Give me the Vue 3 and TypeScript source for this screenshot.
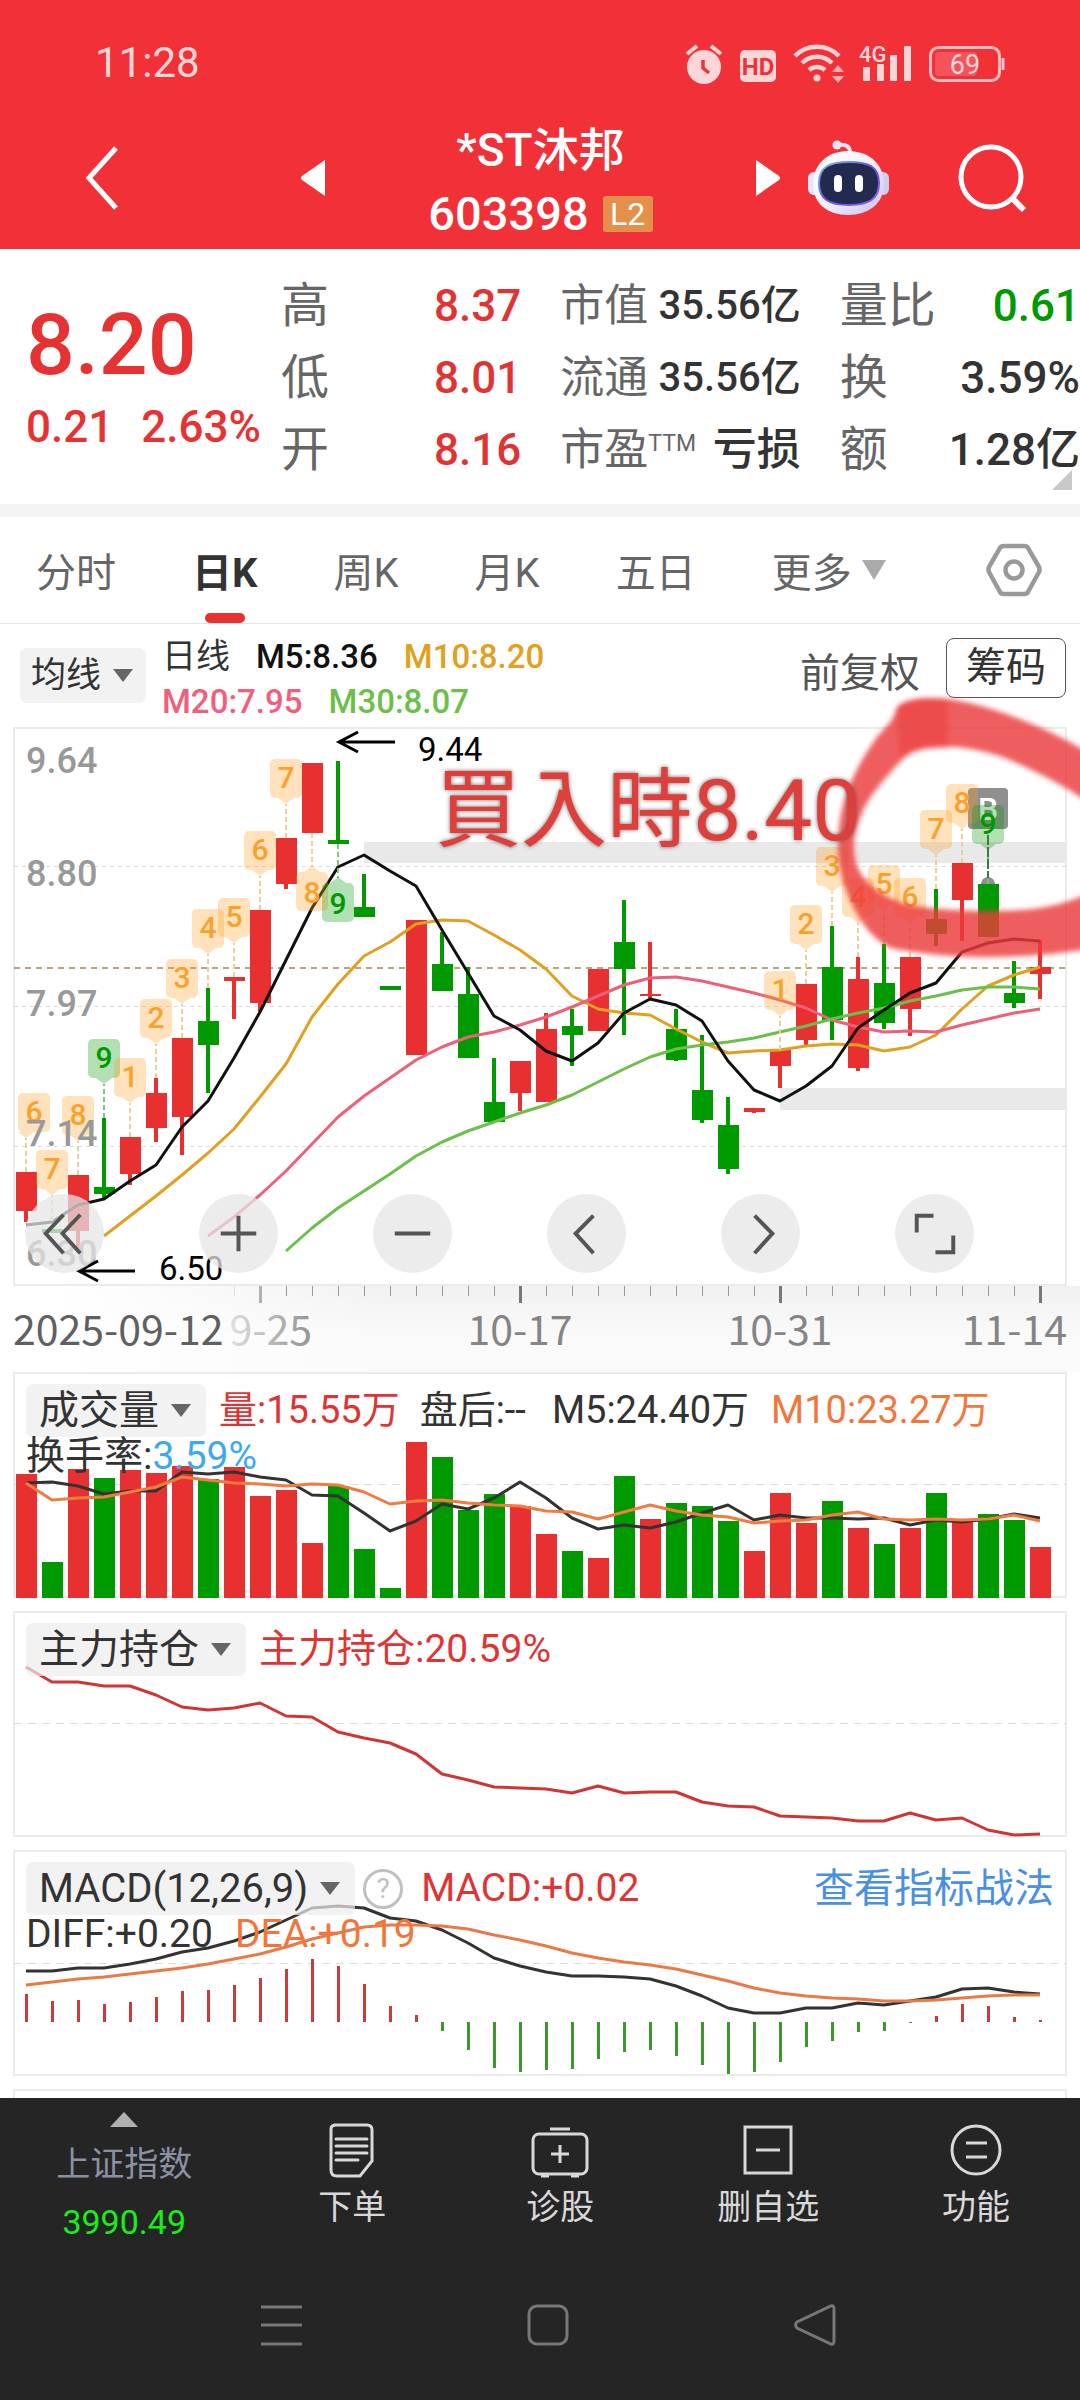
<script setup lang="ts">
interface Candle {
  up: boolean
  top: number
  bottom: number
  high: number
  low: number
}

interface Badge {
  x: number
  anchor: number
  label: string
  green: boolean
  below: boolean
  boxX: number
}

const STEP = 26
const BODY = 21
const cx = (i: number): number => STEP + i * STEP

const RED = '#e93030'
const GREEN = '#009900'

// up, body top, body bottom, high, low
const rawCandles: [number, number, number, number, number][] = [
  [1, 1172, 1211, 1172, 1222], [0, 1229, 1233, 1229, 1233], [1, 1175, 1231, 1175, 1252],
  [0, 1187, 1194, 1118, 1198], [1, 1137, 1174, 1137, 1185], [1, 1093, 1128, 1078, 1142],
  [1, 1038, 1117, 1038, 1155], [0, 1021, 1045, 988, 1093], [1, 977, 981, 977, 1019],
  [1, 910, 1003, 910, 1012], [1, 838, 884, 838, 889], [1, 763, 833, 763, 833],
  [0, 840, 844, 761, 844], [0, 907, 917, 874, 917], [0, 986, 990, 986, 990],
  [1, 920, 1055, 920, 1055], [0, 964, 991, 932, 991], [0, 994, 1058, 967, 1058],
  [0, 1102, 1122, 1058, 1122], [1, 1061, 1093, 1061, 1111], [1, 1029, 1102, 1013, 1102],
  [0, 1026, 1035, 1009, 1066], [1, 969, 1031, 969, 1031], [0, 942, 969, 900, 1035],
  [1, 994, 996, 942, 998], [0, 1029, 1060, 1009, 1061], [0, 1090, 1120, 1035, 1123],
  [0, 1125, 1169, 1097, 1174], [1, 1108, 1112, 1108, 1113], [1, 1050, 1066, 1050, 1088],
  [1, 984, 1040, 984, 1045], [0, 967, 1020, 926, 1040], [1, 979, 1068, 957, 1071],
  [0, 983, 1023, 944, 1029], [1, 957, 1009, 957, 1036], [0, 919, 934, 889, 946],
  [1, 863, 900, 863, 941], [0, 884, 937, 884, 937], [0, 993, 1003, 961, 1008],
  [1, 967, 974, 940, 999],
]
const candles: Candle[] = rawCandles.map(([up, top, bottom, high, low]) => ({
  up: up === 1, top, bottom, high, low,
}))

const line = (ys: number[], from = 0): string =>
  ys.map((y, k) => `${cx(k + from)},${y}`).join(' ')

const ma5 = line([1225, 1222, 1205, 1199, 1181, 1165, 1127, 1101, 1058, 1012, 960, 908, 867, 855, 871, 886, 930, 973, 1016, 1030, 1051, 1061, 1043, 1013, 999, 1005, 1021, 1061, 1090, 1101, 1086, 1066, 1028, 1010, 993, 983, 952, 943, 939, 941])
const ma10 = line([1236, 1216, 1196, 1175, 1153, 1129, 1097, 1064, 1017, 984, 956, 942, 924, 920, 921, 935, 950, 969, 996, 1009, 1013, 1015, 1029, 1042, 1053, 1051, 1050, 1046, 1044, 1045, 1051, 1047, 1035, 1009, 986, 975, 967], 3)
const ma20 = line([1236, 1217, 1195, 1171, 1144, 1117, 1096, 1078, 1060, 1047, 1037, 1032, 1025, 1017, 1007, 996, 985, 978, 977, 981, 987, 993, 1000, 1008, 1020, 1027, 1032, 1031, 1032, 1025, 1019, 1013, 1009], 7)
const ma30 = line([1251, 1228, 1208, 1191, 1174, 1156, 1142, 1131, 1122, 1113, 1105, 1095, 1082, 1069, 1057, 1049, 1045, 1042, 1038, 1032, 1026, 1019, 1013, 1008, 1001, 996, 990, 987, 987, 989], 10)

// candle index, label
const counts: [number, string][] = [
  [0, '6'], [1, '7'], [2, '8'], [3, '9'], [4, '1'], [5, '2'], [6, '3'], [7, '4'], [8, '5'],
  [9, '6'], [10, '7'], [11, '8'], [12, '9'], [29, '1'], [30, '2'], [31, '3'], [32, '4'],
  [33, '5'], [34, '6'], [35, '7'], [36, '8'], [37, '9'],
]
const badges: Badge[] = counts.map(([i, label]) => {
  const below = i === 11 || i === 12
  return {
    x: cx(i),
    anchor: below ? candles[i].low : candles[i].high,
    label,
    green: label === '9',
    below,
    boxX: Math.max(cx(i) - 16, 18),
  }
})

const minorTicks = Array.from({ length: 31 }, (_, k) => k + 9).filter((i) => i % 10 !== 9)
const majorTicks = [9, 19, 29, 39]

const volTops = [1474, 1562, 1469, 1478, 1470, 1473, 1466, 1479, 1467, 1496, 1490, 1543, 1486, 1549, 1588, 1442, 1457, 1510, 1494, 1506, 1534, 1551, 1558, 1476, 1519, 1503, 1506, 1521, 1551, 1493, 1523, 1501, 1528, 1544, 1528, 1493, 1522, 1514, 1520, 1547]
const vol5 = line([1483, 1482, 1486, 1494, 1491, 1491, 1472, 1474, 1472, 1477, 1480, 1495, 1496, 1513, 1531, 1521, 1504, 1509, 1498, 1482, 1498, 1518, 1529, 1525, 1528, 1522, 1513, 1505, 1520, 1515, 1518, 1518, 1519, 1518, 1525, 1520, 1522, 1519, 1514, 1518])
const vol10 = line([1483, 1500, 1498, 1497, 1492, 1487, 1477, 1480, 1483, 1484, 1486, 1484, 1485, 1492, 1504, 1501, 1500, 1503, 1505, 1506, 1511, 1512, 1519, 1512, 1505, 1511, 1515, 1517, 1523, 1521, 1520, 1515, 1512, 1519, 1520, 1519, 1520, 1519, 1515, 1521])

const hold = line([1667, 1682, 1682, 1686, 1686, 1695, 1707, 1710, 1708, 1703, 1716, 1717, 1732, 1738, 1743, 1754, 1774, 1780, 1787, 1788, 1789, 1793, 1786, 1793, 1792, 1792, 1802, 1806, 1807, 1816, 1817, 1818, 1821, 1821, 1813, 1820, 1818, 1830, 1835, 1834])

const diff = line([1971, 1971, 1968, 1968, 1964, 1959, 1952, 1948, 1941, 1932, 1920, 1908, 1906, 1908, 1918, 1921, 1930, 1943, 1958, 1966, 1972, 1976, 1976, 1977, 1979, 1986, 1996, 2008, 2013, 2013, 2008, 2008, 2003, 2005, 2001, 1997, 1989, 1988, 1992, 1994])
const dea = line([1985, 1982, 1979, 1977, 1974, 1971, 1968, 1964, 1959, 1954, 1947, 1939, 1933, 1927, 1925, 1925, 1926, 1929, 1935, 1940, 1946, 1953, 1958, 1962, 1965, 1969, 1975, 1981, 1988, 1993, 1996, 1998, 1999, 2001, 2001, 2000, 1998, 1996, 1995, 1995])
const MACD_ZERO = 2022
const macdBars = [1994, 2001, 2000, 2004, 2002, 1997, 1991, 1990, 1985, 1978, 1969, 1959, 1966, 1984, 2006, 2015, 2031, 2050, 2068, 2072, 2070, 2069, 2059, 2052, 2050, 2056, 2065, 2074, 2072, 2062, 2047, 2041, 2032, 2031, 2023, 2016, 2004, 2006, 2017, 2020]

const priceLabels = [
  { y: 773, text: '9.64' },
  { y: 886, text: '8.80' },
  { y: 1016, text: '7.97' },
  { y: 1146, text: '7.14' },
  { y: 1266, text: '6.30' },
]

const tabs = ['分时', '日K', '周K', '月K', '五日']
</script>

<template>
  <div class="page">
    <header class="top">
      <div class="status">
        <span class="clock">11:28</span>
        <svg class="status-icons" viewBox="680 36 330 50" width="330" height="50" aria-hidden="true">
          <g fill="#fdd5d7">
            <circle cx="704" cy="65" r="17" />
            <path d="M687 52l10-8M721 52l-10-8" stroke="#fdd5d7" stroke-width="4" />
            <path d="M703 58v8l6 5" fill="none" stroke="#f23038" stroke-width="3.5" />
            <rect x="740" y="48" width="36" height="32" rx="5" />
            <text x="758" y="73" text-anchor="middle" font-size="24" font-weight="700" fill="#f23038">HD</text>
            <circle cx="817" cy="76" r="3.5" />
            <g fill="none" stroke="#fdd5d7" stroke-width="4.5">
              <path d="M795 54a31 31 0 0 1 44 0" />
              <path d="M802 61a21 21 0 0 1 30 0" />
              <path d="M809 68a12 12 0 0 1 16 0" />
            </g>
            <path d="M832 70l6-7 6 7zM832 74l6 7 6-7z" opacity=".75" />
            <text x="859" y="60" font-size="22" font-weight="500">4G</text>
            <rect x="863" y="65" width="7" height="14" rx="1" />
            <rect x="877" y="62" width="7" height="17" rx="1" />
            <rect x="890" y="53" width="7" height="26" rx="1" />
            <rect x="904" y="44" width="7" height="35" rx="1" />
            <rect x="930.5" y="45.500" width="69" height="33" rx="8" fill="none" stroke="#fbbcbf" stroke-width="3" />
            <rect x="935" y="50" width="42" height="24" rx="4" fill="#f4535a" />
            <path d="M1003 56v12" stroke="#fbbcbf" stroke-width="3" />
            <text x="965" y="72" text-anchor="middle" font-size="27">69</text>
          </g>
        </svg>
      </div>
      <div class="titlebar">
        <button class="icon-btn" aria-label="返回">
          <svg viewBox="0 0 34 64" width="34" height="64"><path d="M31 2L4 32l27 30" fill="none" stroke="#fff" stroke-width="5" /></svg>
        </button>
        <button class="icon-btn prev" aria-label="上一只">
          <svg viewBox="0 0 24 36" width="24" height="36"><path d="M24 0v36L1 20q-2-2 0-4z" fill="#fff" /></svg>
        </button>
        <div class="title">
          <h1>*ST沐邦</h1>
          <p>603398 <span class="l2">L2</span></p>
        </div>
        <button class="icon-btn" aria-label="下一只">
          <svg viewBox="0 0 24 36" width="24" height="36"><path d="M0 0v36l23-16q2-2 0-4z" fill="#fff" /></svg>
        </button>
        <button class="icon-btn robot" aria-label="助手">
          <svg viewBox="806 134 82 82" width="82" height="82">
            <defs>
              <linearGradient id="shell" x1="0" y1="0" x2="1" y2="1">
                <stop offset="0" stop-color="#fff" />
                <stop offset=".5" stop-color="#f2f1fb" />
                <stop offset="1" stop-color="#c5c2ec" />
              </linearGradient>
              <linearGradient id="rim" x1="0" y1="0" x2="1" y2="1">
                <stop offset="0" stop-color="#7fc6e8" />
                <stop offset=".5" stop-color="#6a4be0" />
                <stop offset="1" stop-color="#9a5be8" />
              </linearGradient>
            </defs>
            <path d="M837 142q12-2 12 8" fill="none" stroke="#e4e2f6" stroke-width="4" />
            <circle cx="836" cy="142" r="4.500" fill="#e8e6f8" />
            <rect x="807" y="169" width="12" height="23" rx="6" fill="#e6e4f8" />
            <rect x="876" y="169" width="12" height="23" rx="6" fill="#cfcdf0" />
            <path d="M847 148c22 0 36 14 36 33 0 20-16 31-36 31s-35-11-35-31c0-19 14-33 35-33z" fill="url(#shell)" />
            <path d="M848 159c20 0 30 5 30 21s-10 22-30 22-30-6-30-22 10-21 30-21z" fill="#222a4e" stroke="url(#rim)" stroke-width="2" />
            <rect x="833" y="172" width="8" height="17" rx="4" fill="#fff" />
            <rect x="854" y="172" width="8" height="17" rx="4" fill="#fff" />
          </svg>
        </button>
        <button class="icon-btn search" aria-label="搜索">
          <svg viewBox="956 143 70 70" width="70" height="70">
            <circle cx="990" cy="177" r="30" fill="none" stroke="#fff" stroke-width="5" />
            <path d="M1011 198l12 12" stroke="#fff" stroke-width="6" />
          </svg>
        </button>
      </div>
    </header>

    <section class="quote">
      <div class="price">
        <strong>8.20</strong>
        <p><span>0.21</span><span>2.63%</span></p>
      </div>
      <dl>
        <div><dt>高</dt><dd class="red">8.37</dd></div>
        <div><dt>低</dt><dd class="red">8.01</dd></div>
        <div><dt>开</dt><dd class="red">8.16</dd></div>
      </dl>
      <dl class="mid">
        <div><dt>市值</dt><dd>35.56亿</dd></div>
        <div><dt>流通</dt><dd>35.56亿</dd></div>
        <div><dt>市盈<sup>TTM</sup></dt><dd class="loss">亏损</dd></div>
      </dl>
      <dl>
        <div><dt>量比</dt><dd class="green">0.61</dd></div>
        <div><dt>换</dt><dd>3.59%</dd></div>
        <div><dt>额</dt><dd>1.28亿</dd></div>
      </dl>
      <i class="corner"></i>
    </section>

    <nav class="tabs">
      <button v-for="t in tabs" :key="t" :class="{ on: t === '日K' }">{{ t }}</button>
      <button class="more">更多<i class="caret light"></i></button>
      <button class="gear" aria-label="设置">
        <svg viewBox="0 0 56 54" width="56" height="54" fill="none" stroke="#999" stroke-width="4.500">
          <path d="M18 3h20q3 0 4 2l11 19q1 3 0 5L42 49q-1 2-4 2H18q-3 0-4-2L3 29q-1-2 0-5L14 5q1-2 4-2z" />
          <circle cx="28" cy="27" r="8.500" />
        </svg>
      </button>
    </nav>

    <section class="kline">
      <div class="legend">
        <button class="pick">均线<i class="caret"></i></button>
        <div class="averages">
          <p><span class="day">日线</span><span class="m5">M5:8.36</span><span class="m10">M10:8.20</span></p>
          <p><span class="m20">M20:7.95</span><span class="m30">M30:8.07</span></p>
        </div>
        <button class="adjust">前复权</button>
        <button class="chips">筹码</button>
      </div>

      <div class="plot">
        <svg class="chart" viewBox="0 727 1080 559">
          <rect x="14" y="728" width="1052" height="557" fill="none" stroke="#ebebeb" stroke-width="2" />
          <rect x="364" y="842" width="702" height="21" fill="#e9e9e9" />
          <rect x="780" y="1088" width="286" height="22" fill="#e9e9e9" />
          <g stroke="#dcdcdc" stroke-dasharray="4 4">
            <path d="M14 866.5H1066M14 1006.5H1066M14 1146.5H1066" />
          </g>
          <path d="M14 968H1066" stroke="#b5a67c" stroke-width="2" stroke-dasharray="6 5" />

          <g v-for="(c, i) in candles" :key="i" :fill="c.up ? RED : GREEN">
            <rect :x="cx(i) - 2" :y="c.high" width="4" :height="c.low - c.high" />
            <rect :x="cx(i) - 10" :y="c.top" :width="BODY" :height="c.bottom - c.top" />
          </g>

          <g fill="none" stroke-width="3" stroke-linejoin="round">
            <polyline :points="ma10" stroke="#e0a020" />
            <polyline :points="ma20" stroke="#ec6079" />
            <polyline :points="ma30" stroke="#6cbf4a" />
            <polyline :points="ma5" stroke="#111" />
          </g>

          <rect x="968" y="788" width="40" height="41" rx="4" fill="#8f8f8f" />
          <text class="flag" x="988" y="820" fill="#fff">B</text>
          <path d="M981 884a7 7 0 0 1 14 0z" fill="#8f8f8f" />

          <g v-for="b in badges" :key="b.x">
            <path
              :d="b.below ? `M${b.x} ${b.anchor}v34` : `M${b.x} ${b.anchor}v-34`"
              :stroke="b.green ? '#7fc47f' : '#e8cf98'" stroke-width="2" stroke-dasharray="5 3"
            />
            <g :fill="b.green ? '#009900' : '#ffa01e'" fill-opacity=".3">
              <rect :x="b.boxX" :y="b.below ? b.anchor + 39 : b.anchor - 79" width="32" height="39" rx="5" />
              <path :d="b.below ? `M${b.x - 8} ${b.anchor + 39}l8 -6l8 6z` : `M${b.x - 8} ${b.anchor - 40}l8 6l8 -6z`" />
            </g>
            <text
              class="badge" :x="b.boxX + 16" :y="b.below ? b.anchor + 70 : b.anchor - 50"
              :fill="b.green ? '#009900' : '#f9a12b'"
            >{{ b.label }}</text>
          </g>
          <path d="M988 835V878" stroke="#3b7a44" stroke-width="2" stroke-dasharray="10 2" />

          <text v-for="p in priceLabels" :key="p.y" class="scale" x="26" :y="p.y">{{ p.text }}</text>

          <g fill="none" stroke="#000" stroke-width="3">
            <path d="M395 742H339M358 732l-19 10 19 10" />
            <path d="M135 1271H79M98 1261l-19 10 19 10" />
          </g>
          <text class="extreme" x="418" y="761">9.44</text>
          <text class="extreme" x="159" y="1280">6.50</text>
        </svg>

        <div class="tools">
          <button aria-label="最早"><svg viewBox="0 0 80 80"><path d="M39 21L21 40l18 20M56 21L38 40l18 20" /></svg></button>
          <button aria-label="放大"><svg viewBox="0 0 80 80"><path d="M22 40h36M40 22v36" /></svg></button>
          <button aria-label="缩小"><svg viewBox="0 0 80 80"><path d="M22 40h36" /></svg></button>
          <button aria-label="左移"><svg viewBox="0 0 80 80"><path d="M47 22L29 40l18 20" /></svg></button>
          <button aria-label="右移"><svg viewBox="0 0 80 80"><path d="M34 22l18 18-18 20" /></svg></button>
          <button aria-label="全屏"><svg viewBox="0 0 80 80"><path d="M22 39V22h17M59 42v17H41" /></svg></button>
        </div>

        <svg class="marks" viewBox="0 727 1080 559">
          <defs>
            <filter id="brush" x="-5%" y="-5%" width="110%" height="110%"><feGaussianBlur stdDeviation="2.500" /></filter>
          </defs>
          <g filter="url(#brush)" fill="#ec3a3a">
            <path
              fill-opacity=".82"
              d="M896 710C899 701 915 698 929 698C955 698 985 705 1022 720C1050 731 1070 741 1100 760V812C1080 795 1050 777 1005 758C985 751 965 747 953 747C935 746 918 747 905 757C895 767 876 788 867 803C858 820 853 838 854 850C855 872 868 890 902 903C925 909 960 911 988 911C1030 911 1060 908 1100 888V946C1070 954 1020 957 988 957C950 957 915 953 891 948C870 938 858 918 850 900C840 876 836 855 839 827C842 795 857 765 877 737C884 728 893 722 896 710z"
            />
            <path fill-opacity=".5" d="M896 710C899 701 915 698 948 699V748C925 748 912 750 900 758z" />
          </g>
          <text class="note" x="435" y="840">買入時8.40</text>
        </svg>
      </div>

      <div class="axis">
        <svg class="chart" viewBox="0 1286 1080 86">
          <defs>
            <linearGradient id="fade" gradientUnits="userSpaceOnUse" x1="222" y1="0" x2="320" y2="0">
              <stop offset="0" stop-color="#e6e6e6" />
              <stop offset="1" stop-color="#8c8c8c" />
            </linearGradient>
          </defs>
          <path d="M234.500 1286v10" stroke="#e0e0e0" />
          <path v-for="i in minorTicks" :key="i" :d="`M${cx(i) + .5} 1286v10`" stroke="#999" />
          <path
            v-for="i in majorTicks" :key="'m' + i" :d="`M${cx(i) + .5} 1286v17`"
            :stroke="i === 9 ? '#b0b0b0' : '#777'" stroke-width="3"
          />
          <g class="dates">
            <text x="312" y="1345" text-anchor="end" fill="url(#fade)">9-25</text>
            <text x="13" y="1345" fill="#606060">2025-09-12</text>
            <text x="520" y="1345" text-anchor="middle">10-17</text>
            <text x="780" y="1345" text-anchor="middle">10-31</text>
            <text x="1067" y="1345" text-anchor="end">11-14</text>
          </g>
        </svg>
      </div>
    </section>

    <section class="panel">
      <svg class="chart" viewBox="0 1372 1080 239">
        <rect x="14" y="1373" width="1052" height="224" fill="none" stroke="#ebebeb" stroke-width="2" />
        <path d="M14 1484.500H1066" stroke="#dcdcdc" stroke-dasharray="8 6" />
        <rect
          v-for="(y, i) in volTops" :key="i" :x="cx(i) - 10" :y="y" :width="BODY" :height="1598 - y"
          :fill="candles[i].up ? RED : GREEN"
        />
        <g fill="none" stroke-width="3" stroke-linejoin="round">
          <polyline :points="vol5" stroke="#333" />
          <polyline :points="vol10" stroke="#f27b42" />
        </g>
      </svg>
      <div class="readout">
        <div class="row volume">
          <button class="pick">成交量<i class="caret"></i></button>
          <span class="red">量:15.55万</span>
          <span class="after">盘后:--</span>
          <span class="v5">M5:24.40万</span>
          <span class="orange">M10:23.27万</span>
        </div>
        <div class="row second"><span>换手率:<b>3.59%</b></span></div>
      </div>
    </section>

    <section class="panel">
      <svg class="chart" viewBox="0 1611 1080 239">
        <rect x="14" y="1612" width="1052" height="224" fill="none" stroke="#ebebeb" stroke-width="2" />
        <path d="M14 1723.500H1066" stroke="#dcdcdc" stroke-dasharray="8 6" />
        <polyline :points="hold" fill="none" stroke="#d03535" stroke-width="3" stroke-linejoin="round" />
      </svg>
      <div class="readout">
        <div class="row">
          <button class="pick">主力持仓<i class="caret"></i></button>
          <span class="red">主力持仓:20.59%</span>
        </div>
      </div>
    </section>

    <section class="panel">
      <svg class="chart" viewBox="0 1850 1080 239">
        <rect x="14" y="1851" width="1052" height="224" fill="none" stroke="#ebebeb" stroke-width="2" />
        <path d="M14 1963.500H1066" stroke="#dcdcdc" stroke-dasharray="8 6" />
        <path
          v-for="(y, i) in macdBars" :key="i" :d="`M${cx(i) + .5} ${MACD_ZERO}V${y}`"
          :stroke="y < MACD_ZERO ? '#cc3a3a' : '#3a992a'" stroke-width="3"
        />
        <g fill="none" stroke-width="3" stroke-linejoin="round">
          <polyline :points="diff" stroke="#333" />
          <polyline :points="dea" stroke="#ea7a45" />
        </g>
      </svg>
      <div class="readout">
        <div class="row">
          <button class="pick">MACD(12,26,9)<i class="caret"></i></button>
          <button class="help" aria-label="说明">?</button>
          <span class="red">MACD:+0.02</span>
          <a href="#" class="guide">查看指标战法</a>
        </div>
        <div class="row second"><span>DIFF:+0.20</span><span class="dea">DEA:+0.19</span></div>
      </div>
    </section>
    <div class="next-panel"></div>

    <footer class="bottom">
      <nav class="actions">
        <a href="#" class="index">
          <i class="up"></i>
          <span>上证指数</span>
          <b>3990.49</b>
        </a>
        <button>
          <svg viewBox="0 0 60 60">
            <path d="M12 5h33q5 0 5 5v31L38 56H15q-6 0-6-6V9q0-4 5-4z" />
            <path d="M14 19h31M14 26h31M14 33h31M14 40h22" stroke-linecap="round" />
          </svg>
          下单
        </button>
        <button>
          <svg viewBox="0 0 60 60">
            <rect x="3" y="14" width="54" height="40" rx="6" />
            <path d="M20 9h20M30 25v18M21 34h18M11 56h8M41 56h8" />
          </svg>
          诊股
        </button>
        <button>
          <svg viewBox="0 0 60 60"><rect x="7" y="7" width="46" height="46" /><path d="M18 30h24" /></svg>
          删自选
        </button>
        <button>
          <svg viewBox="0 0 60 60"><circle cx="30" cy="30" r="24" /><path d="M20 23h21M20 37h21" /></svg>
          功能
        </button>
      </nav>
      <div class="system">
        <button aria-label="最近任务"><svg viewBox="0 0 44 44"><path d="M2 4h41M2 22h41M2 41h41" /></svg></button>
        <button aria-label="主页"><svg viewBox="0 0 44 44"><rect x="3" y="3" width="38" height="38" rx="8" /></svg></button>
        <button aria-label="后退"><svg viewBox="0 0 44 44"><path d="M38 3q3-1 3 3v32q0 4-3 3L4 25q-3-3 0-6z" /></svg></button>
      </div>
    </footer>
  </div>
</template>

<style>
body {
  margin: 0;
  background: #fff;
}
</style>

<style scoped>
.page {
  overflow-x: hidden;
  background: #fff;
  color: #333;
  font-family: Roboto, "Noto Sans CJK SC", sans-serif;
}
.page * {
  box-sizing: border-box;
}
button {
  margin: 0;
  padding: 0;
  border: 0;
  background: none;
  color: inherit;
  font: inherit;
  white-space: nowrap;
}
p, h1, dl, dd {
  margin: 0;
}
a {
  color: inherit;
  text-decoration: none;
}
svg {
  display: block;
}
.red { color: #e03434; }
.green { color: #009900; }
.orange { color: #f2763c; }

.top {
  background: #f23038;
  color: #fff;
}
.status {
  display: flex;
  align-items: center;
  justify-content: space-between;
  height: 117px;
  padding: 8px 70px 0 95px;
}
.clock {
  color: #fdd5d7;
  font-size: 42px;
  line-height: 60px;
}
.titlebar {
  display: flex;
  align-items: flex-start;
  height: 132px;
  padding: 0 53px 0 85px;
}
.icon-btn {
  display: flex;
  align-items: center;
  height: 121px;
}
.prev { margin-left: 182px; }
.robot { margin-left: 27px; }
.search { margin-left: 68px; }
.title {
  flex: 1;
  text-align: center;
}
.title h1 {
  font-size: 46px;
  font-weight: 500;
  line-height: 66px;
}
.title p {
  display: flex;
  align-items: center;
  justify-content: center;
  gap: 14px;
  font-size: 47px;
  font-weight: 500;
  line-height: 62px;
}
.l2 {
  width: 50px;
  border-radius: 3px;
  background: #e2904a;
  font-size: 32px;
  font-weight: 400;
  line-height: 36px;
}

.quote {
  position: relative;
  display: grid;
  grid-template-columns: 242px 1fr 1fr 1fr;
  column-gap: 39px;
  padding: 21px 0 18px;
  border-bottom: 13px solid #f4f4f4;
}
.price {
  padding: 27px 0 0 26px;
  color: #e63232;
  white-space: nowrap;
}
.price strong {
  display: block;
  font-size: 86px;
  font-weight: 500;
  line-height: 96px;
}
.price p {
  display: flex;
  gap: 28px;
  font-size: 44px;
  font-weight: 500;
  line-height: 68px;
}
dl div {
  display: flex;
  justify-content: space-between;
  align-items: center;
  height: 72px;
  white-space: nowrap;
}
dt {
  color: #666;
  font-size: 48px;
  line-height: 72px;
}
dd {
  font-size: 44px;
  font-weight: 500;
  line-height: 72px;
}
.mid dt { font-size: 44px; }
.mid dd { font-size: 40px; }
.mid .loss { font-size: 44px; }
sup {
  font-size: 23px;
  line-height: 24px;
  vertical-align: 14px;
}
.corner {
  position: absolute;
  right: 8px;
  bottom: 14px;
  border-left: 20px solid transparent;
  border-bottom: 20px solid #c8c8c8;
}

.tabs {
  display: flex;
  align-items: stretch;
  gap: 76px;
  height: 107px;
  padding: 0 38px 0 36px;
  border-bottom: 1px solid #e5e5e5;
  color: #666;
  font-size: 40px;
}
.tabs .on {
  position: relative;
  color: #333;
  font-weight: 700;
}
.tabs .on::after {
  content: "";
  position: absolute;
  bottom: 0;
  left: 50%;
  width: 40px;
  height: 10px;
  margin-left: -20px;
  border-radius: 5px;
  background: #e93030;
}
.tabs .more {
  display: flex;
  align-items: center;
  gap: 10px;
}
.gear {
  display: flex;
  align-items: center;
  margin-left: auto;
}
.caret {
  display: inline-block;
  border: 10px solid transparent;
  border-top: 13px solid #666;
  border-bottom: 0;
}
.caret.light {
  border-width: 20px 12px 0;
  border-top-color: #aaa;
}

.legend {
  display: flex;
  align-items: flex-start;
  height: 103px;
  padding: 0 14px 0 20px;
}
.pick {
  display: flex;
  align-items: center;
  gap: 12px;
  height: 53px;
  padding: 0 15px 0 13px;
  border-radius: 7px;
  background: rgba(236, 236, 236, .7);
  color: #333;
  font-size: 40px;
  line-height: 53px;
}
.legend .pick {
  height: 55px;
  margin-top: 24px;
  padding: 0 13px 0 11px;
  font-size: 35px;
}
.averages {
  margin: 10px auto 0 16px;
  font-size: 33px;
  font-weight: 500;
  line-height: 45px;
  white-space: nowrap;
}
.averages p {
  display: flex;
  gap: 26px;
}
.day {
  font-size: 34px;
  font-weight: 400;
}
.m5 { color: #111; }
.m10 { color: #e0a020; }
.m20 { color: #f0607a; }
.m30 { color: #6cc04a; }
.adjust {
  margin-top: 20px;
  color: #555;
  font-size: 40px;
  line-height: 60px;
}
.chips {
  width: 120px;
  height: 60px;
  margin: 14px 0 0 26px;
  border: 1px solid #555;
  border-radius: 8px;
  font-size: 40px;
  line-height: 58px;
}

.plot {
  position: relative;
}
.chart {
  width: 100%;
  height: auto;
}
.marks {
  position: absolute;
  inset: 0;
  width: 100%;
  overflow: visible;
  pointer-events: none;
}
.badge, .flag {
  font-size: 30px;
  font-weight: 500;
  text-anchor: middle;
}
.flag {
  font-size: 32px;
}
.scale {
  fill: #999;
  font-size: 36px;
  font-weight: 500;
}
.extreme {
  font-size: 33px;
}
.note {
  fill: #de3f3b;
  font-family: Roboto, "Noto Sans CJK TC", sans-serif;
  font-size: 86px;
  text-shadow: 0 0 4px rgba(70, 70, 70, .8);
}
.tools {
  position: absolute;
  right: 106px;
  bottom: 13px;
  left: 25px;
  display: flex;
  justify-content: space-between;
}
.tools button {
  width: 79px;
  height: 79px;
  border-radius: 50%;
  background: rgba(229, 229, 229, .74);
}
.tools path {
  fill: none;
  stroke: #555;
  stroke-width: 4;
}
.axis {
  background:
    linear-gradient(90deg, #fff 60px, rgba(255, 255, 255, 0) 400px),
    linear-gradient(#f1f1f1, #fafafa 60%);
}
.dates {
  fill: #858585;
  font-family: "Noto Sans CJK SC", sans-serif;
  font-size: 41px;
}

.panel {
  position: relative;
}
.readout {
  position: absolute;
  top: 12px;
  right: 26px;
  left: 26px;
  font-size: 39px;
  line-height: 53px;
  white-space: nowrap;
}
.row {
  display: flex;
  align-items: center;
}
.volume {
  font-size: 38px;
}
.row > .red { margin-left: 13px; }
.row .after { margin-left: 20px; }
.row .v5 { margin-left: 26px; }
.row .orange { margin-left: 22px; }
.second {
  height: 38px;
  line-height: 38px;
}
.second b {
  color: #3fa9ee;
  font-weight: 400;
}
.second .dea {
  margin-left: 22px;
  color: #f2763c;
}
.help {
  width: 40px;
  height: 40px;
  margin-left: 8px;
  border: 3px solid #c0c0c0;
  border-radius: 50%;
  color: #c0c0c0;
  font-size: 28px;
  line-height: 34px;
}
.help + .red { margin-left: 18px; }
.guide {
  margin-left: auto;
  color: #4a90e2;
  font-size: 40px;
}
.next-panel {
  height: 9px;
  margin: 0 13px;
  border: 2px solid #ebebeb;
  border-bottom: 0;
}

.bottom {
  background: #252525;
  color: #d8d8d8;
}
.actions {
  display: grid;
  grid-template-columns: 23% repeat(4, 1fr);
  height: 152px;
  font-size: 34px;
  line-height: 46px;
}
.actions button, .index {
  display: flex;
  flex-direction: column;
  align-items: center;
}
.actions button {
  gap: 4px;
  padding-top: 22px;
}
.actions svg {
  width: 60px;
  height: 60px;
  fill: none;
  stroke: #d8d8d8;
  stroke-width: 3;
}
.index {
  padding-top: 14px;
  color: #8a91a3;
}
.index .up {
  border: 14px solid transparent;
  border-top: 0;
  border-bottom: 15px solid #b0b0b0;
}
.index span {
  margin-top: 14px;
}
.index b {
  margin-top: 12px;
  color: #1aee1a;
  font-weight: 400;
}
.system {
  display: flex;
  justify-content: space-around;
  align-items: center;
  height: 150px;
  padding: 0 132px 0 147px;
}
.system svg {
  width: 44px;
  height: 44px;
  fill: none;
  stroke: #777;
  stroke-width: 3;
}
</style>
